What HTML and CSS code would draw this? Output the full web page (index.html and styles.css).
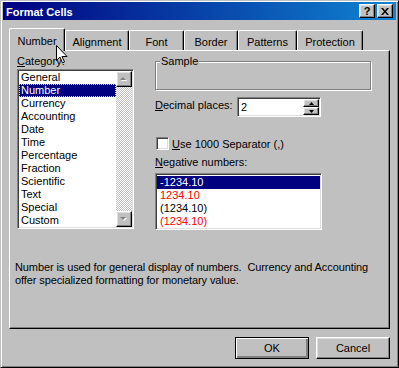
FILE: index.html
```html
<!DOCTYPE html>
<html>
<head>
  <title>Format Cells</title>
  <link rel="stylesheet" href="styles.css">
</head>
<body>
  <div class="window">
    <div class="titlebar">
      <span class="title">Format Cells</span>
      <div class="caption-btns">
        <span class="cbtn raised help">?</span>
        <span class="cbtn raised">
          <svg width="8" height="7" viewBox="0 0 8 7"><path d="M0 0h2l2 2.4L6 0h2L5 3.5 8 7H6L4 4.6 2 7H0l3-3.5z" fill="#000"/></svg>
        </span>
      </div>
    </div>

    <div class="client">
      <div class="tabs">
        <div class="tab active t-number">Number</div>
        <div class="tab t-alignment">Alignment</div>
        <div class="tab t-font">Font</div>
        <div class="tab t-border">Border</div>
        <div class="tab t-patterns">Patterns</div>
        <div class="tab t-protection">Protection</div>
      </div>

      <div class="panel">
        <div class="panel-top">
          <div class="category">
            <div class="label"><u>C</u>ategory:</div>
            <div class="listbox sunken cat-list">
              <ul class="items">
                <li>General</li>
                <li class="sel focus">Number</li>
                <li>Currency</li>
                <li>Accounting</li>
                <li>Date</li>
                <li>Time</li>
                <li>Percentage</li>
                <li>Fraction</li>
                <li>Scientific</li>
                <li>Text</li>
                <li>Special</li>
                <li>Custom</li>
              </ul>
              <div class="vscroll">
                <span class="sbtn raised">
                  <svg width="8" height="5" viewBox="0 0 8 5"><path d="M4 1l3 3H1z" fill="#fff"/><path d="M3 0l3 3H0z" fill="#808080"/></svg>
                </span>
                <span class="track"></span>
                <span class="sbtn raised">
                  <svg width="8" height="5" viewBox="0 0 8 5"><path d="M1 1h6L4 4z" fill="#fff"/><path d="M0 0h6L3 3z" fill="#808080"/></svg>
                </span>
              </div>
            </div>
          </div>

          <div class="options">
            <div class="groupbox"><span class="legend">Sample</span></div>

            <div class="decimal-row">
              <div class="label decimal-label"><u>D</u>ecimal places:</div>
              <div class="spin sunken">
                <span class="spin-val">2</span>
                <div class="spin-btns">
                  <span class="spin-btn raised"><svg width="5" height="3" viewBox="0 0 5 3"><path d="M2.5 0L5 3H0z" fill="#000"/></svg></span>
                  <span class="spin-btn raised"><svg width="5" height="3" viewBox="0 0 5 3"><path d="M0 0h5L2.5 3z" fill="#000"/></svg></span>
                </div>
              </div>
            </div>

            <div class="check-row">
              <span class="checkbox sunken"></span>
              <span><u>U</u>se 1000 Separator (,)</span>
            </div>

            <div class="label neg-label"><u>N</u>egative numbers:</div>
            <ul class="listbox sunken neg-list">
              <li class="sel">-1234.10</li>
              <li class="red">1234.10</li>
              <li>(1234.10)</li>
              <li class="red">(1234.10)</li>
            </ul>
          </div>
        </div>

        <p class="desc">Number is used for general display of numbers.&nbsp; Currency and Accounting<br>offer specialized formatting for monetary value.</p>
      </div>

      <div class="buttons">
        <button class="btn default">OK</button>
        <button class="btn raised">Cancel</button>
      </div>
    </div>

    <svg class="cursor" width="12" height="19" viewBox="0 0 12 19"><path d="M0.5 0.5v15l3.5-3.5 2.5 6 2-1-2.5-5.5h5z" fill="#fff" stroke="#000"/></svg>
  </div>
</body>
</html>
```

FILE: styles.css
```css
body {
  margin: 0;
  background: #c0c0c0;
  color: #000;
  font-family: "Liberation Sans", Arial, sans-serif;
  font-size: 11px;
}

ul {
  margin: 0;
  padding: 0;
  list-style: none;
}

/* 3d borders */
.raised {
  box-sizing: border-box;
  border: 1px solid;
  border-color: #fff #000 #000 #fff;
  box-shadow: inset -1px -1px #808080, inset 1px 1px #dfdfdf;
  background: #c0c0c0;
}

.sunken {
  box-sizing: border-box;
  border: 1px solid;
  border-color: #808080 #fff #fff #808080;
  box-shadow: inset 1px 1px #404040, inset -1px -1px #dfdfdf;
  padding: 1px;
  background: #fff;
}

.window {
  position: relative;
  width: 399px;
  height: 368px;
  box-sizing: border-box;
  border: 1px solid;
  border-color: #c0c0c0 #000 #000 #c0c0c0;
  box-shadow: inset 1px 1px #fff, inset -1px -1px #808080;
  padding: 1px 2px 2px 2px;
  background: #c0c0c0;
  overflow: hidden;
}

.titlebar {
  display: flex;
  align-items: center;
  height: 18px;
  padding: 0 3px 0 3px;
  background: linear-gradient(to right, #000080, #1084d0);
}

.title {
  color: #fff;
  font-weight: bold;
  font-size: 11px;
  padding-top: 1px;
}

.caption-btns {
  display: flex;
  gap: 2px;
  margin-left: auto;
}

.cbtn {
  display: flex;
  align-items: center;
  justify-content: center;
  width: 16px;
  height: 14px;
  font-weight: bold;
  font-size: 11px;
  line-height: 12px;
}

.client {
  padding: 8px 6px 0 6px;
}

/* tabs */
.tabs {
  display: flex;
  align-items: flex-end;
  height: 22px;
}

.tab {
  box-sizing: border-box;
  height: 20px;
  border: 1px solid;
  border-color: #fff #000 transparent #fff;
  border-bottom: none;
  border-radius: 2px 2px 0 0;
  box-shadow: inset -1px 0 #808080;
  padding-top: 4px;
  line-height: 14px;
  text-align: center;
  white-space: nowrap;
}

.tab.active {
  position: relative;
  z-index: 1;
  height: 23px;
  padding-top: 5px;
  margin-bottom: -1px;
  background: #c0c0c0;
}

.t-number { width: 56px; }
.t-alignment { width: 64px; }
.t-font { width: 55px; }
.t-border { width: 54px; }
.t-patterns { width: 59px; }
.t-protection { width: 66px; }

.panel {
  box-sizing: border-box;
  height: 279px;
  border: 1px solid;
  border-color: #fff #000 #000 #fff;
  box-shadow: inset -1px -1px #808080;
  padding: 3px 5px 0 5px;
}

.panel-top {
  display: flex;
  gap: 21px;
}

.label {
  line-height: 15px;
}

.category {
  width: 117px;
  margin-left: 2px;
}

.cat-list {
  display: flex;
  height: 160px;
}

.items {
  flex: 1;
}

.items li,
.neg-list li {
  height: 13px;
  line-height: 13px;
  padding-left: 2px;
  white-space: nowrap;
}

li.sel {
  background: #000080;
  color: #fff;
}

li.focus {
  outline: 1px dotted #e8e890;
  outline-offset: -1px;
}

.vscroll {
  display: flex;
  flex-direction: column;
  width: 16px;
}

.sbtn {
  display: flex;
  align-items: center;
  justify-content: center;
  height: 16px;
}

.track {
  flex: 1;
  background: repeating-conic-gradient(#fff 0 25%, #c0c0c0 0 50%) 0 0 / 2px 2px;
}

/* right side */
.options {
  width: 217px;
}

.groupbox {
  position: relative;
  box-sizing: border-box;
  width: 216px;
  height: 29px;
  margin-top: 7px;
  border: 1px solid #808080;
  box-shadow: inset 1px 1px #fff, 1px 1px #fff;
}

.legend {
  position: absolute;
  top: -8px;
  left: 4px;
  padding: 0 1px;
  line-height: 15px;
  background: #c0c0c0;
}

.decimal-row {
  display: flex;
  margin-top: 7px;
}

.decimal-label {
  width: 82px;
  padding-top: 1px;
}

.spin {
  display: flex;
  width: 84px;
  height: 20px;
}

.spin-val {
  flex: 1;
  padding-left: 2px;
  line-height: 16px;
}

.spin-btns {
  display: flex;
  flex-direction: column;
  width: 16px;
}

.spin-btn {
  display: flex;
  align-items: center;
  justify-content: center;
  height: 8px;
}

.check-row {
  display: flex;
  align-items: center;
  gap: 3px;
  height: 13px;
  margin-top: 20px;
  padding-left: 1px;
}

.checkbox {
  width: 13px;
  height: 13px;
}

.neg-label {
  margin-top: 5px;
}

.neg-list {
  width: 167px;
  height: 57px;
  margin-top: 3px;
  padding-top: 2px;
}

.neg-list li {
  padding-left: 3px;
}

.neg-list li.red {
  color: #ff0000;
}

.desc {
  margin: 31px 0 0 0;
  line-height: 13px;
  letter-spacing: -0.1px;
  white-space: nowrap;
}

/* bottom buttons */
.buttons {
  display: flex;
  justify-content: flex-end;
  gap: 7px;
  margin-top: 8px;
}

.btn {
  width: 74px;
  height: 22px;
  padding: 0;
  font-family: inherit;
  font-size: 11px;
  color: #000;
}

.btn.default {
  box-sizing: border-box;
  border: 1px solid #000;
  box-shadow: inset 1px 1px #fff, inset -1px -1px #808080, inset -2px -2px #808080;
  background: #c0c0c0;
}

.cursor {
  position: absolute;
  left: 55px;
  top: 44px;
  z-index: 2;
}
```
